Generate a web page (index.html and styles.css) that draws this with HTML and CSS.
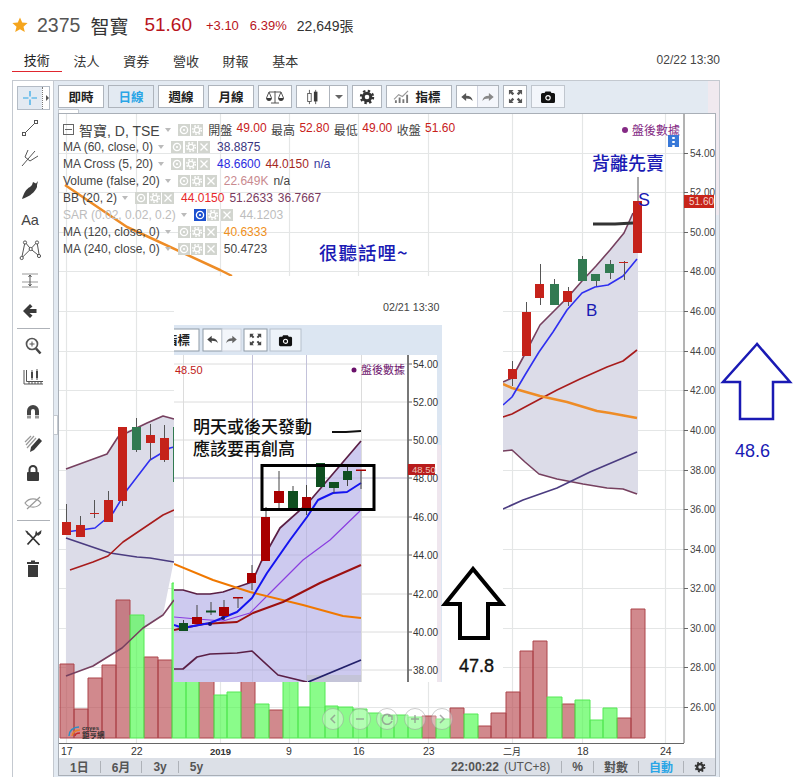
FILE: index.html
```html
<!DOCTYPE html>
<html lang="zh-Hant">
<head>
<meta charset="utf-8">
<title>2375 智寶</title>
<link rel="stylesheet" href="styles.css">
</head>
<body>
<svg class="defs" aria-hidden="true">
  <symbol id="i-eye" viewBox="0 0 12 12"><circle class="w-line" cx="6" cy="6" r="3.6"/><circle class="w-fill" cx="6" cy="6" r="1.1"/></symbol>
  <symbol id="i-gear" viewBox="0 0 12 12"><circle class="w-line" cx="6" cy="6" r="2.7"/><circle class="w-teeth" cx="6" cy="6" r="4.3"/></symbol>
  <symbol id="i-x" viewBox="0 0 12 12"><path class="w-line" d="M2.5 2.5L9.5 9.5M9.5 2.5L2.5 9.5"/></symbol>
  <symbol id="i-cog" viewBox="0 0 16 16"><circle class="cog-ring" cx="8" cy="8" r="3.8"/><circle class="cog-teeth" cx="8" cy="8" r="6"/></symbol>
  <symbol id="i-undo" viewBox="0 0 16 16"><path d="M1.5 8L7 3.5V6.5C11.5 6.5 14 8.5 14.5 12.5C13 10.5 11 9.6 7 9.6V12.5Z"/></symbol>
  <symbol id="i-redo" viewBox="0 0 16 16"><path d="M14.5 8L9 3.5V6.5C4.5 6.5 2 8.5 1.5 12.5C3 10.5 5 9.6 9 9.6V12.5Z"/></symbol>
  <symbol id="i-full" viewBox="0 0 16 16"><path d="M1 1H6L4.4 2.6L6.6 4.8L4.8 6.6L2.6 4.4L1 6ZM15 1V6L13.4 4.4L11.2 6.6L9.4 4.8L11.6 2.6L10 1ZM1 15V10L2.6 11.6L4.8 9.4L6.6 11.2L4.4 13.4L6 15ZM15 15H10L11.6 13.4L9.4 11.2L11.2 9.4L13.4 11.6L15 10Z"/></symbol>
  <symbol id="i-cam" viewBox="0 0 16 16"><path d="M1 5.5Q1 4 2.5 4H4.5L5.5 2.5H10.5L11.5 4H13.5Q15 4 15 5.5V12.5Q15 14 13.5 14H2.5Q1 14 1 12.5Z"/><circle class="cam-lens" cx="8" cy="8.8" r="2.2"/></symbol>
</svg>

<div class="page">
  <header class="quote">
    <svg class="star" viewBox="0 0 16 16"><path d="M8 .6L10.2 5.6L15.6 6.1L11.5 9.7L12.8 15L8 12.2L3.2 15L4.5 9.7L.4 6.1L5.8 5.6Z"/></svg>
    <span class="code">2375</span>
    <span class="name">智寶</span>
    <span class="price">51.60</span>
    <span class="change">+3.10</span>
    <span class="change pct">6.39%</span>
    <span class="volume">22,649張</span>
  </header>

  <nav class="tabs">
    <a class="tab tab-on">技術</a>
    <a class="tab">法人</a>
    <a class="tab">資券</a>
    <a class="tab">營收</a>
    <a class="tab">財報</a>
    <a class="tab">基本</a>
    <time class="stamp">02/22 13:30</time>
  </nav>

  <section class="app">
    <aside class="rail">
      <div class="rail-on">
        <svg class="ic" viewBox="0 0 24 24"><path class="cross" d="M12 5V10.5M12 13.500V19M5 12H10.500M13.500 12H19"/></svg>
        <span class="rail-more"></span>
      </div>
      <div class="rail-group draw">
        <div class="ri"><svg class="ic" viewBox="0 0 24 24"><path class="ln" d="M6 18L18 6"/><rect class="node" x="4.500" y="16.500" width="3" height="3"/><rect class="node" x="16.500" y="4.500" width="3" height="3"/></svg></div>
        <div class="ri"><svg class="ic" viewBox="0 0 24 24"><path class="ln" d="M4 20L10 13M7 11L10 4M7 11L12 15L20 10M10 13L17 5"/></svg></div>
        <div class="ri g2"><svg class="ic" viewBox="0 0 24 24"><path class="solid" d="M4 21C6 15 8 11 12 9L14 7L15 4L18 5.500L20 3L19 7V9L18 11C15 16 10 19 4 21Z"/></svg></div>
        <div class="ri aa">Aa</div>
        <div class="ri g1"><svg class="ic" viewBox="0 0 24 24"><path class="ln" d="M3.700 19L7 3L12.700 10L19 3L21.300 17L12.700 10L3.700 19"/><circle class="node" cx="7" cy="3.500" r="1.600"/><circle class="node" cx="19" cy="3.500" r="1.600"/><circle class="node" cx="12.700" cy="10" r="1.600"/><circle class="node" cx="3.700" cy="19" r="1.600"/><circle class="node" cx="21" cy="17" r="1.600"/></svg></div>
        <div class="ri"><svg class="ic" viewBox="0 0 24 24"><path class="ln-soft" d="M4 5H20M4 13H20M4 18H20"/><path class="ln" d="M12 6V17M10.500 8L12 6L13.500 8M10.500 15L12 17L13.500 15"/></svg></div>
        <div class="ri"><svg class="ic" viewBox="0 0 24 24"><path class="solid" d="M5 12L12 5L14.500 7.500L11.500 10H18.500V14H11.500L14.500 16.500L12 19Z"/></svg></div>
      </div>
      <hr class="rail-sep">
      <div class="rail-group">
        <div class="ri"><svg class="ic" viewBox="0 0 24 24"><circle class="mag" cx="11" cy="10" r="5.500"/><path class="ln" d="M8.500 10H13.500M11 7.500V12.500"/><path class="mag-h" d="M15 14.500L19.500 19.500"/></svg></div>
        <div class="ri g1"><svg class="ic" viewBox="0 0 24 24"><path class="ln" d="M3 5V19H22M5.500 5V16.500H22M8 19V17M11 19V17M14 19V17M17 19V17M20 19V17"/><path class="solid" d="M10 7H12V13H10ZM15 6H17V13H15Z"/><path class="ln" d="M11 5V15M16 4V15"/></svg></div>
        <div class="ri g5"><svg class="ic" viewBox="0 0 24 24"><path class="magnet" d="M8 15V11A4 4 0 0 1 16 11V15"/><path class="magnet-tip" d="M8 15.500V18.500M16 15.500V18.500"/></svg></div>
        <div class="ri g1"><svg class="ic" viewBox="0 0 24 24"><path class="ln-soft" d="M5 14L13 5M6 17L15 7M4 11L10 5"/><path class="solid" d="M9 21L10 16L18 7L21 10L13 19Z"/></svg></div>
        <div class="ri"><svg class="ic" viewBox="0 0 24 24"><path class="shackle" d="M8.500 12V8.500A3.500 3.500 0 0 1 15.500 8.500V12"/><rect class="solid" x="6" y="11" width="12" height="9" rx="1"/></svg></div>
        <div class="ri"><svg class="ic" viewBox="0 0 24 24"><path class="ln-soft" d="M4 12C8 6.500 16 6.500 20 12C16 17.500 8 17.500 4 12ZM6 18L19 6"/></svg></div>
      </div>
      <hr class="rail-sep">
      <div class="rail-group">
        <div class="ri"><svg class="ic" viewBox="0 0 24 24"><path class="tool-bar" d="M7 7L18.500 19M16 8L6.500 18.500"/><path class="solid" d="M15 4.500L16.500 7L18.500 5.500L20.500 4L20 7.500L17.500 9.800L14 8.500ZM4 4.500L6.500 5L8.500 8.500L7 9Z"/></svg></div>
        <div class="ri g1"><svg class="ic" viewBox="0 0 24 24"><path class="solid" d="M10 3.500H14V5H18V7H6V5H10ZM7 8H17V20H7Z"/></svg></div>
      </div>
    </aside>

    <div class="main">
      <span class="split"></span>
      <div class="toolbar">
        <button class="btn w46">即時</button>
        <button class="btn w46 btn-on">日線</button>
        <button class="btn w46">週線</button>
        <button class="btn w46">月線</button>
        <button class="btn w34"><svg class="tb" viewBox="0 0 20 16"><path class="ln" d="M10 2V14M6 14H14M4 3H16M4 3L1.500 9M4 3L6.500 9M16 3L13.500 9M16 3L18.500 9"/><path class="solid" d="M1 9H7Q6.500 12 4 12Q1.500 12 1 9ZM13 9H19Q18.500 12 16 12Q13.500 12 13 9Z"/></svg></button>
        <div class="btn w52 split-btn">
          <span class="sb-main"><svg class="tb" viewBox="0 0 20 18"><path class="ln" d="M6 1V17M13 1V17"/><rect class="node" x="4" y="5" width="4" height="9"/><rect class="solid" x="11" y="3" width="4" height="11"/></svg></span>
          <span class="sb-arrow"></span>
        </div>
        <button class="btn w30"><svg class="tb cog"><use href="#i-cog"/></svg></button>
        <button class="btn w66 ind"><svg class="tb-ind" viewBox="0 0 18 16"><path class="ln-soft" d="M1 11L6 6L10 8L16 2"/><path class="solid-soft" d="M2 12H4V15H2ZM6 9H8V15H6ZM10 11H12V15H10ZM14 6H16V15H14Z"/></svg>指標</button>
        <div class="btn w43 pair">
          <span class="half"><svg class="arrow"><use href="#i-undo"/></svg></span>
          <span class="half half-off"><svg class="arrow"><use href="#i-redo"/></svg></span>
        </div>
        <button class="btn w24"><svg class="full"><use href="#i-full"/></svg></button>
        <button class="btn w34 btn-soft"><svg class="cam"><use href="#i-cam"/></svg></button>
      </div>
      <span class="mini-tab"></span>

      <div class="chart">
        <svg class="plot" viewBox="59 114 656 644" width="656" height="644">
          <path class="grid" d="M59 153.500H684M59 192.500H684M59 232.500H684M59 271.500H684M59 311.500H684M59 351.500H684M59 390.500H684M59 430.500H684M59 470.500H684M59 509.500H684M59 549.500H684M59 588.500H684M59 628.500H684M59 667.500H684M59 707.500H684"/>
          <path class="grid" d="M66.500 114V743M136.500 114V743M220.500 114V743M289.500 114V743M358.500 114V743M428.500 114V743M512.500 114V743M582.500 114V743M665.500 114V743"/>

          <path class="band" d="M66 469L107 454L118 437L147 423L163 416L174 419V560L163 615L143 628L122 648L93 666L66 676Z"/>
          <path class="band" d="M503 382L512 378L526 352L540 325L554 311L568 297L582 281L596 266L610 250L624 233L633 213L638 201V494L623 489L607 488L583 484L557 479L539 474L525 462L512 450L503 451Z"/>

          <path class="vol-up" d="M60 738V664H74V738ZM74 738V709H88V738ZM88 738V678H102V738ZM102 738V665H116V738ZM116 738V600H130V738ZM144 738V657H158V738ZM158 738V660H172V738ZM199 738V660H214V738ZM241 738V660H255V738ZM269 738V710H283V738ZM422 738V716H436V738ZM450 738V708H464V738ZM478 738V726H491V738ZM491 738V713H506V738ZM506 738V692H520V738ZM520 738V651H533V738ZM533 738V641H547V738ZM562 738V704H575V738ZM617 738V718H631V738ZM631 738V609H645V738Z"/>
          <path class="vol-dn" d="M130 738V615H144V738ZM172 738V583H186V738ZM186 738V660H199V738ZM214 738V695H227V738ZM227 738V692H241V738ZM255 738V704H269V738ZM283 738V660H298V738ZM298 738V707H310V738ZM310 738V660H325V738ZM325 738V706H338V738ZM338 738V707H353V738ZM353 738V709H367V738ZM367 738V713H381V738ZM381 738V715H394V738ZM394 738V715H408V738ZM408 738V717H422V738ZM436 738V719H450V738ZM464 738V714H478V738ZM547 738V697H562V738ZM575 738V700H590V738ZM590 738V720H603V738ZM603 738V708H617V738Z"/>

          <polyline class="l-bb" points="66,469 107,454 118,437 147,423 163,416 174,419"/>
          <polyline class="l-bb" points="66,676 93,666 122,648 143,628 163,615 174,600"/>
          <polyline class="l-bb" points="503,382 512,378 526,352 540,325 554,311 568,297 582,281 596,266 610,250 624,233 633,213"/>
          <polyline class="l-bb" points="503,451 512,450 525,462 539,474 557,479 583,484 607,488 623,489 637,494"/>
          <polyline class="l-60" points="66,538 110,553 137,557 150,558 174,562"/>
          <polyline class="l-60" points="503,509 523,500 557,488 590,472 637,452"/>
          <polyline class="l-20" points="70,570 93,562 108,556 123,542 163,515 174,510"/>
          <polyline class="l-20" points="503,417 512,414 525,407 540,399 557,390 580,379 607,367 623,361 637,350"/>
          <polyline class="l-or" points="65,185 127,227 220,270 232,276"/>
          <polyline class="l-or" points="503,384 512,388 540,396 567,402 597,411 610,413 637,418"/>
          <polyline class="l-5" points="66,532 95,528 113,513 127,490 150,460 170,448 174,447"/>
          <polyline class="l-5" points="503,405 512,397 525,375 539,352 553,332 567,310 582,293 595,287 608,285 623,276 637,259"/>
          <polyline class="l-ink" points="593,224 615,224 633,223"/>

          <path class="wick" d="M66.500 504V535M80.500 516V537M94.500 500V518M108.500 491V522M122.500 427V506M136.500 418V452M150.500 424V460M164.500 425V462M512.500 361V386M526.500 302V356M540.500 264V305M554.500 279V305M568.500 287V306M582.500 256V281M596.500 274V286M610.500 260V279M624.500 261V280M638 177V253"/>
          <g class="c-up">
            <rect x="62" y="522" width="9" height="13"/><rect x="76" y="525" width="9" height="12"/><rect x="90" y="513" width="9" height="1"/><rect x="104" y="500" width="9" height="22"/><rect x="118" y="427" width="9" height="74"/><rect x="146" y="435" width="9" height="8"/><rect x="160" y="438" width="9" height="22"/>
            <rect x="508" y="369" width="9" height="10"/><rect x="522" y="312" width="9" height="44"/><rect x="535" y="284" width="9" height="14"/><rect x="563" y="291" width="9" height="11"/><rect x="619" y="262" width="9" height="1"/><rect x="633" y="201" width="9" height="52"/>
          </g>
          <g class="c-dn">
            <rect x="132" y="427" width="9" height="23"/><rect x="173" y="427" width="1" height="55"/>
            <rect x="550" y="284" width="9" height="21"/><rect x="578" y="259" width="9" height="22"/><rect x="591" y="274" width="9" height="7"/><rect x="605" y="264" width="9" height="9"/>
          </g>

          <path class="logo-a" d="M69 736C69 731 73 727 79 727"/>
          <path class="logo-b" d="M72 736C72 733 75 730 80 730"/>
          <path class="logo-c" d="M75 736C75 734 77 733 80 733"/>
          <text class="logo-en" x="82" y="729.500">cnyes</text>
          <text class="logo-zh" x="82" y="738">鉅亨網</text>

          <path class="axis" d="M684 114V743M59 743.500H684"/>
          <path class="tick" d="M684 153.500H688M684 192.500H688M684 232.500H688M684 271.500H688M684 311.500H688M684 351.500H688M684 390.500H688M684 430.500H688M684 470.500H688M684 509.500H688M684 549.500H688M684 588.500H688M684 628.500H688M684 667.500H688M684 707.500H688"/>
          <g class="y-lab">
            <text x="690" y="157">54.00</text><text x="690" y="196">52.00</text><text x="690" y="236">50.00</text><text x="690" y="275">48.00</text><text x="690" y="315">46.00</text><text x="690" y="355">44.00</text><text x="690" y="394">42.00</text><text x="690" y="434">40.00</text><text x="690" y="474">38.00</text><text x="690" y="513">36.00</text><text x="690" y="553">34.00</text><text x="690" y="592">32.00</text><text x="690" y="632">30.00</text><text x="690" y="671">28.00</text><text x="690" y="711">26.00</text>
          </g>
          <rect class="tag" x="684" y="195" width="30" height="13"/>
          <text class="tag-t" x="689" y="205">51.60</text>
          <g class="x-lab">
            <text x="61" y="755">17</text><text x="131" y="755">22</text><text class="x-year" x="210" y="755">2019</text><text x="286" y="755">9</text><text x="353" y="755">16</text><text x="423" y="755">23</text><text class="x-zh" x="503" y="755">二月</text><text x="577" y="755">18</text><text x="660" y="755">24</text>
          </g>

          <g class="navc">
            <circle cx="333" cy="719" r="10.500"/><circle cx="360" cy="719" r="10.500"/><circle cx="387" cy="719" r="10.500"/><circle cx="415" cy="719" r="10.500"/><circle cx="442" cy="719" r="10.500"/>
            <path class="navi" d="M335 715L331 719L335 723M356 719H364M411 719H419M415 715V723M440 715L444 719L440 723M391 716A5 5 0 1 0 392 721M388 716H392V720"/>
          </g>
        </svg>

        <div class="legend">
          <div class="lg lg-top"><span class="collapse"></span><span class="lg-name">智寶, D, TSE</span><i class="caret"></i><span class="tools t-top"><b class="t"><svg><use href="#i-eye"/></svg></b><b class="t"><svg><use href="#i-gear"/></svg></b></span><span class="vals v-top"><span>開盤</span><span class="v-red">49.00</span><span>最高</span><span class="v-red">52.80</span><span>最低</span><span class="v-red">49.00</span><span>收盤</span><span class="v-red">51.60</span></span></div>
          <div class="lg"><span>MA (60, close, 0)</span><i class="caret"></i><span class="tools"><b class="t"><svg><use href="#i-eye"/></svg></b><b class="t"><svg><use href="#i-gear"/></svg></b><b class="t"><svg><use href="#i-x"/></svg></b></span><span class="vals"><span class="v-navy">38.8875</span></span></div>
          <div class="lg"><span>MA Cross (5, 20)</span><i class="caret"></i><span class="tools"><b class="t"><svg><use href="#i-eye"/></svg></b><b class="t"><svg><use href="#i-gear"/></svg></b><b class="t"><svg><use href="#i-x"/></svg></b></span><span class="vals"><span class="v-blue">48.6600</span><span class="v-brick">44.0150</span><span class="v-indigo">n/a</span></span></div>
          <div class="lg"><span>Volume (false, 20)</span><i class="caret"></i><span class="tools"><b class="t"><svg><use href="#i-eye"/></svg></b><b class="t"><svg><use href="#i-gear"/></svg></b><b class="t"><svg><use href="#i-x"/></svg></b></span><span class="vals"><span class="v-rose">22.649K</span><span>n/a</span></span></div>
          <div class="lg"><span>BB (20, 2)</span><i class="caret"></i><span class="tools t-bb"><b class="t"><svg><use href="#i-eye"/></svg></b><b class="t"><svg><use href="#i-gear"/></svg></b><b class="t"><svg><use href="#i-x"/></svg></b></span><span class="vals"><span class="v-bright">44.0150</span><span class="v-plum">51.2633</span><span class="v-plum">36.7667</span></span></div>
          <div class="lg lg-off"><span>SAR (0.02, 0.02, 0.2)</span><i class="caret"></i><span class="tools"><b class="t t-on"><svg><use href="#i-eye"/></svg></b><b class="t"><svg><use href="#i-gear"/></svg></b><b class="t"><svg><use href="#i-x"/></svg></b></span><span class="vals"><span>44.1203</span></span></div>
          <div class="lg"><span>MA (120, close, 0)</span><i class="caret"></i><span class="tools"><b class="t"><svg><use href="#i-eye"/></svg></b><b class="t"><svg><use href="#i-gear"/></svg></b><b class="t"><svg><use href="#i-x"/></svg></b></span><span class="vals"><span class="v-orange">40.6333</span></span></div>
          <div class="lg"><span>MA (240, close, 0)</span><i class="caret"></i><span class="tools"><b class="t"><svg><use href="#i-eye"/></svg></b><b class="t"><svg><use href="#i-gear"/></svg></b><b class="t"><svg><use href="#i-x"/></svg></b></span><span class="vals"><span>50.4723</span></span></div>
        </div>

        <div class="after"><i class="dot"></i>盤後數據</div>
        <span class="info"></span>

        <div class="status">
          <div class="st-left"><span class="st">1日</span><span class="st">6月</span><span class="st">3y</span><span class="st st-last">5y</span></div>
          <div class="st-right">
            <span class="clock">22:00:22</span><span class="utc">(UTC+8)</span>
            <span class="st-r">%</span><span class="st-r st-wide">對數</span><span class="st-r st-wide st-blue">自動</span>
            <svg class="st-cog"><use href="#i-cog"/></svg>
          </div>
        </div>
      </div>
    </div>
  </section>

  <svg class="markup" viewBox="0 0 810 777" width="810" height="777">
    <rect class="patch" x="174" y="276" width="329" height="406"/>
    <text class="inset-time" x="383" y="311">02/21 13:30</text>
    <defs><clipPath id="inset-clip"><rect x="174" y="325" width="268" height="357"/></clipPath></defs>
    <g clip-path="url(#inset-clip)">
      <rect class="in-frame" x="174" y="325" width="268" height="357"/>
      <rect class="in-pink" x="437" y="445" width="4" height="237"/>
      <rect class="in-btn" x="160" y="329" width="39" height="22"/>
      <text class="in-btn-t" x="190" y="345" text-anchor="end">指標</text>
      <rect class="in-btn" x="203" y="329" width="19" height="22"/>
      <rect class="in-btn in-btn-off" x="222" y="329" width="19" height="22"/>
      <use class="in-undo" href="#i-undo" x="206" y="333" width="13" height="13"/>
      <use class="in-redo" href="#i-redo" x="225" y="333" width="13" height="13"/>
      <rect class="in-btn" x="244" y="329" width="23" height="22"/>
      <use class="in-full" href="#i-full" x="249" y="333" width="13" height="13"/>
      <rect class="in-btn in-btn-soft" x="270" y="329" width="31" height="22"/>
      <use class="in-cam" href="#i-cam" x="278" y="333" width="15" height="15"/>
      <rect class="in-plot" x="174" y="355" width="263" height="327"/>
      <path class="in-grid" d="M174 364H408M174 402H408M174 440H408M174 478H408M174 517H408M174 555H408M174 594H408M174 632H408M174 670H408M183.500 355V682M252.500 355V682M306.500 355V682M361.500 355V682"/>
      <path class="in-band" d="M174 590L183 590L197 594L210 594L223 592L252 582L261 562L280 528L308 503L361 441V682H174Z"/>
      <rect class="in-foot" x="307" y="675" width="54" height="7"/>
      <path class="in-grid-faint" d="M174 478H408M174 555H361M174 632H361M174 670H361M252.500 355V682M306.500 355V682"/>
      <polyline class="i-bb" points="174,590 183,590 197,594 210,594 223,592 252,582 261,562 280,528 308,503 361,441"/>
      <polyline class="i-bb" points="174,669 183,669 197,657 210,654 237,653 252,651 278,675 307,682"/>
      <polyline class="i-60" points="308,682 361,660"/>
      <polyline class="i-10" points="174,617 197,619 223,621 250,613 270,593 303,560 330,540 360,511"/>
      <polyline class="i-or" points="174,564 213,580 250,592 303,605 343,616 361,618"/>
      <polyline class="i-20" points="174,630 203,624 237,622 253,613 283,602 320,583 361,565"/>
      <polyline class="i-5" points="174,625 183,628 210,623 237,612 252,598 267,573 290,540 307,517 318,500 333,493 347,492 361,483"/>
      <path class="i-wick" d="M183.500 620V631M197 605V624M211 602V615M224 600V616M238 598V608M252 565V590M266 507V561M279 471V508M293 486V511M306.500 485V515M320.500 463V487M334 482V493M347.500 467V486M361 470V489"/>
      <g class="i-up">
        <rect x="192" y="617" width="10" height="7"/><rect x="219" y="607" width="10" height="9"/><rect x="233" y="597" width="10" height="1.500"/><rect x="247" y="573" width="9" height="10"/><rect x="261" y="517" width="9" height="44"/><rect x="274" y="491" width="10" height="12"/><rect x="302" y="497" width="9" height="13"/><rect x="356" y="469.500" width="10" height="1.500"/>
      </g>
      <g class="i-dn">
        <rect x="179" y="623" width="9" height="8"/><rect x="206" y="610.500" width="10" height="2"/><rect x="288" y="491" width="10" height="20"/><rect x="316" y="463" width="9" height="24"/><rect x="329" y="482" width="10" height="6"/><rect x="343" y="471" width="9" height="9"/>
      </g>
      <circle class="i-dot" cx="210" cy="624" r="2"/><circle class="i-dot" cx="223" cy="618" r="2"/>
      <path class="in-axis" d="M408 355V682"/>
      <path class="in-tick" d="M408 364H412M408 402H412M408 440H412M408 478H412M408 517H412M408 555H412M408 594H412M408 632H412M408 670H412"/>
      <g class="in-y">
        <text x="413" y="368">54.00</text><text x="413" y="406">52.00</text><text x="413" y="444">50.00</text><text x="413" y="482">48.00</text><text x="413" y="521">46.00</text><text x="413" y="559">44.00</text><text x="413" y="598">42.00</text><text x="413" y="636">40.00</text><text x="413" y="674">38.00</text>
      </g>
      <rect class="in-tag" x="408" y="464" width="27" height="11"/>
      <text class="in-tag-t" x="412" y="473">48.50</text>
      <text class="in-red" x="175" y="374">48.50</text>
      <circle class="in-pdot" cx="354" cy="370" r="2.500"/>
      <text class="in-after" x="361" y="374">盤後數據</text>
    </g>
    <path class="mk-line" d="M332 432H346L361 431"/>
    <text class="mk-text" x="193" y="433">明天或後天發動</text>
    <text class="mk-text" x="193" y="455">應該要再創高</text>
    <rect class="mk-box" x="262" y="465.500" width="112" height="44"/>
    <path class="mk-arrow" d="M473 569L445 604H460V638H488V604H502Z"/>
    <text class="mk-num" x="459" y="672">47.8</text>

    <text class="bl-zh bl-wide" x="319" y="260">很聽話哩~</text>
    <text class="bl-zh" x="592" y="170">背離先賣</text>
    <text class="bl-s" x="638" y="206">S</text>
    <text class="bl-b" x="586" y="316">B</text>
    <path class="bl-arrow" d="M757 344L723 382H740V419H773V382H790Z"/>
    <text class="bl-num" x="735" y="457">48.6</text>
  </svg>
</div>
</body>
</html>
```

FILE: styles.css
```css
* { box-sizing: border-box; }
html, body { margin: 0; padding: 0; background: #fff; }
body { font-family: "Liberation Sans", "Noto Sans CJK TC", sans-serif; color: #333; }
.defs { position: absolute; width: 0; height: 0; }
.page { position: relative; width: 810px; height: 777px; overflow: hidden; }

/* quote header */
.quote { display: flex; align-items: center; height: 48px; padding: 2px 0 0 12px; }
.star { width: 16px; height: 16px; fill: #f5a51d; }
.code { margin-left: 9px; font-size: 19.500px; color: #555; }
.name { margin-left: 10px; font-size: 19px; color: #333; }
.price { margin-left: 16px; font-size: 19px; color: #b8141c; }
.change { margin-left: 14px; font-size: 13px; color: #b8141c; }
.pct { margin-left: 11px; }
.volume { margin-left: 10px; font-size: 14px; color: #333; }

/* tabs */
.tabs { display: flex; align-items: center; width: 708px; height: 25px; margin: 0 0 7px 12px; padding-bottom: 1px; }
.tab { display: flex; align-items: center; justify-content: center; width: 49.700px; height: 24px; font-size: 13px; color: #333; }
.tab-on { border-bottom: 1px solid #e0262e; color: #222; }
.stamp { margin-left: auto; font-size: 12px; color: #444; }

/* app */
.app { display: flex; width: 708px; height: 700px; margin-left: 12px; border: 1px solid #c4c9d0; }
.rail { width: 41px; flex: none; display: flex; flex-direction: column; padding-top: 5px; border-right: 1px solid #c4c9d0; background: #fff; }
.rail-on { display: flex; width: 33px; height: 24px; margin: 0 0 3px 4px; border: 1px solid #b4bcc6; background: #e3eaf2; }
.rail-on .ic { margin: -1px 0 0 0; }
.rail-more { flex: 1; border-left: 1px dotted #777; background: #fff; position: relative; }
.rail-more::after { content: ""; position: absolute; left: 3px; top: 8px; border-left: 3px solid #555; border-top: 3px solid transparent; border-bottom: 3px solid transparent; }
.rail-group { display: flex; flex-direction: column; align-items: center; }
.rail-group.draw { padding-right: 6px; }
.ri { display: flex; align-items: center; justify-content: center; height: 30px; }
.g1 { margin-top: 1px; }
.g2 { margin-top: 2px; }
.g5 { margin-top: 5px; }
.aa { font-size: 14.500px; color: #444; }
.ic { width: 24px; height: 24px; display: block; }
.rail-sep { width: 33px; height: 1px; margin: 2px 0 2px 4px; border: 0; background: #aeb2b8; flex: none; }
.cross { fill: none; stroke: #2aa5e6; stroke-width: 1.200; }
.ln { fill: none; stroke: #555; stroke-width: 1; }
.ln-soft { fill: none; stroke: #999; stroke-width: 1.200; }
.node { fill: #fff; stroke: #555; stroke-width: 1; }
.solid { fill: #3a3a3a; }
.solid-soft { fill: #777; }
.mag { fill: none; stroke: #555; stroke-width: 1.700; }
.mag-h { fill: none; stroke: #444; stroke-width: 2.600; }
.magnet { fill: none; stroke: #444; stroke-width: 4; }
.magnet-tip { fill: none; stroke: #999; stroke-width: 4; }
.shackle { fill: none; stroke: #3a3a3a; stroke-width: 2; }
.tool-bar { fill: none; stroke: #333; stroke-width: 1.800; }

/* main column */
.main { flex: 1; position: relative; padding: 4px 3px 0 4px; background: linear-gradient(#f0e9ef, #f0e9ef) right top / 11px 134px no-repeat, #e3eaf2; }
.split { position: absolute; left: 0; top: 334px; width: 4px; height: 20px; background: #fff; border: 1px solid #c4c9d0; border-left: 0; }
.toolbar { display: flex; gap: 4px; height: 23px; margin-bottom: 5px; }
.btn { display: flex; align-items: center; justify-content: center; gap: 5px; height: 23px; padding: 0; border: 1px solid #aeb4bc; background: #fff; font: bold 12.500px "Noto Sans CJK TC", sans-serif; color: #222; }
.w46 { width: 46px; }
.w34 { width: 34px; }
.w52 { width: 52px; }
.w30 { width: 30px; }
.w66 { width: 66px; }
.w43 { width: 43px; }
.w24 { width: 24px; }
.btn-on { background: #e3eaf2; color: #2aa5e6; }
.btn-soft { background: #f3f6fb; border-color: #c0c6ce; }
.ind { gap: 5px; padding-right: 4px; }
.tb { width: 20px; height: 16px; }
.tb-ind { width: 17px; height: 15px; }
.cog { width: 16px; height: 16px; }
.cog-ring { fill: none; stroke: #333; stroke-width: 3; }
.cog-teeth { fill: none; stroke: #333; stroke-width: 2.400; stroke-dasharray: 2.360 2.360; }
.split-btn { gap: 0; }
.sb-main { flex: 1; display: flex; align-items: center; justify-content: center; height: 21px; border-right: 1px solid #aeb4bc; }
.sb-arrow { width: 17px; display: flex; justify-content: center; }
.sb-arrow::after { content: ""; border-top: 4px solid #666; border-left: 4px solid transparent; border-right: 4px solid transparent; }
.pair { gap: 0; }
.half { flex: 1; height: 21px; display: flex; align-items: center; justify-content: center; fill: #555; }
.half-off { border-left: 1px solid #d0d4e0; background: #f4f6fb; fill: #888; }
.arrow { width: 14px; height: 14px; }
.full { width: 15px; height: 15px; fill: #555; }
.cam { width: 16px; height: 16px; fill: #111; }
.cam-lens { fill: #111; stroke: #fff; stroke-width: 1.200; }
.mini-tab { position: absolute; left: 4px; top: 28px; width: 21px; height: 5px; background: #fff; border: 1px solid #c4c9d0; border-bottom: 0; }

/* chart */
.chart { position: relative; width: 658px; border: 1px solid #a9afb7; background: #fff; }
.plot { display: block; }
.grid { fill: none; stroke: #e4e6e6; stroke-width: 1.200; }
.band { fill: #dcdce8; }
.vol-up { fill: #b94a50; fill-opacity: .65; stroke: #ac444a; stroke-width: 1; }
.vol-dn { fill: #4cfb4c; fill-opacity: .65; stroke: #55e855; stroke-width: 1; }
polyline { fill: none; stroke-linejoin: round; }
.l-bb { stroke: #76405f; stroke-width: 1.600; }
.l-60 { stroke: #4b3c80; stroke-width: 1.600; }
.l-20 { stroke: #a81c1c; stroke-width: 1.600; }
.l-or { stroke: #ee8c26; stroke-width: 2.500; }
.l-5 { stroke: #2f2ff0; stroke-width: 1.600; }
.l-ink { stroke: #333; stroke-width: 3; }
.wick { fill: none; stroke: #555; stroke-width: 1; }
.c-up { fill: #c5221a; }
.c-dn { fill: #327a52; }
.logo-a { fill: none; stroke: #2b8fc4; stroke-width: 1.500; }
.logo-b { fill: none; stroke: #e8802a; stroke-width: 1.500; }
.logo-c { fill: none; stroke: #c82a2a; stroke-width: 1.500; }
.logo-en { font: bold 6px "Liberation Sans", sans-serif; fill: #333; }
.logo-zh { font: bold 7.500px "Noto Sans CJK TC", sans-serif; fill: #333; }
.axis { fill: none; stroke: #666; stroke-width: 1; }
.tick { fill: none; stroke: #666; stroke-width: 1; }
.y-lab { font: 10px "Liberation Sans", sans-serif; fill: #444; }
.tag { fill: #c8251a; }
.tag-t { font: 10px "Liberation Sans", sans-serif; fill: #f6d6d0; }
.x-lab { font: 10.500px "Liberation Sans", sans-serif; fill: #333; }
.x-year { font-weight: bold; font-size: 9.500px; }
.x-zh { font: 9px "Noto Sans CJK TC", sans-serif; }
.navc circle { fill: #fff; fill-opacity: .35; stroke: #999; stroke-opacity: .5; stroke-width: 1; }
.navi { fill: none; stroke: #888; stroke-opacity: .7; stroke-width: 1.500; }

/* legend */
.legend { position: absolute; left: 4px; top: 7px; font-size: 12px; color: #444; }
.lg { display: flex; align-items: center; height: 17px; }
.lg-off { color: #bdbdbd; }
.collapse { position: relative; width: 11px; height: 11px; margin-right: 5px; border: 1px solid #666; }
.collapse::after { content: ""; position: absolute; left: 1px; right: 1px; top: 4px; height: 1px; background: #666; }
.lg-name { font-size: 14px; color: #444; }
.caret { width: 0; height: 0; margin: 0 7px 0 5px; border-top: 4px solid #bbb; border-left: 3.500px solid transparent; border-right: 3.500px solid transparent; }
.tools { display: flex; gap: 1.500px; }
.t { display: block; width: 12px; height: 12px; background: #d2d5cf; }
.t svg { display: block; width: 12px; height: 12px; }
.t-on { background: #1c50cf; }
.w-line { fill: none; stroke: #fff; stroke-width: 1.300; }
.w-fill { fill: #fff; }
.w-teeth { fill: none; stroke: #fff; stroke-width: 1.500; stroke-dasharray: 1.690 1.690; }
.vals { display: flex; gap: 5px; margin-left: 7px; }
.v-top { margin-left: 5px; gap: 4.400px; }
.v-red { color: #c8201a; }
.v-navy { color: #3b3680; }
.v-blue { color: #2a2ae0; }
.v-brick { color: #a5281e; }
.v-indigo { color: #3a3aa0; }
.v-rose { color: #c98a8f; }
.v-bright { color: #e8282a; }
.v-plum { color: #7a3a5e; }
.v-orange { color: #f09020; }
.after { position: absolute; right: 35px; top: 7px; display: flex; align-items: center; height: 17px; gap: 3px; font-size: 12px; color: #842a84; white-space: nowrap; }
.dot { width: 6px; height: 6px; border-radius: 50%; background: #842a84; margin-right: 1px; }
.info { position: absolute; left: 609px; top: 21px; width: 11px; height: 12px; background: radial-gradient(circle, #fff 1px, transparent 1.500px) center top 1px / 3px 4px repeat-y, #3878d8; }

/* status bar */
.status { display: flex; justify-content: space-between; height: 17px; background: #dce0e7; font-size: 12px; color: #555; }
.st-left, .st-right { display: flex; align-items: center; }
.st { display: flex; align-items: center; height: 12px; padding: 0 11px; border-right: 1px solid #aeb2b8; font-weight: bold; }
.st-last { border-right: 0; }
.clock { font-weight: bold; }
.utc { margin: 0 11px 0 5px; }
.st-r { display: flex; align-items: center; height: 12px; padding: 0 10px; border-left: 1px solid #aeb2b8; font-weight: bold; }
.st-wide { font-family: "Noto Sans CJK TC", sans-serif; padding: 0 10px; }
.st-blue { color: #2aa5e6; border-right: 1px solid #aeb2b8; }
.st-cog { width: 12px; height: 12px; margin: 0 9px 0 10px; }

/* pasted screenshot and hand-drawn markup over the chart */
.markup { position: absolute; left: 0; top: 0; }
.patch { fill: #fff; }
.inset-time { font: 10.700px "Liberation Sans", sans-serif; fill: #444; }
.in-frame { fill: #dce6f2; }
.in-pink { fill: #efe6ee; }
.in-btn { fill: #fff; stroke: #8e9aa6; stroke-width: 1; }
.in-btn-off { stroke: #ccd2dc; fill: #f3f6fb; }
.in-btn-soft { stroke: #b6c0cc; fill: #eef3f9; }
.in-btn-t { font: bold 12.500px "Noto Sans CJK TC", sans-serif; fill: #222; }
.in-undo { fill: #444; }
.in-redo { fill: #666; }
.in-full { fill: #444; }
.in-cam { fill: #111; }
.in-plot { fill: #fff; }
.in-grid { fill: none; stroke: #dcdcdc; stroke-width: 1; }
.in-band { fill: #cdcaef; }
.in-foot { fill: #c4c4d8; }
.in-grid-faint { fill: none; stroke: #b8b6d8; stroke-width: .7; }
.i-bb { stroke: #5a1f45; stroke-width: 1.700; }
.i-60 { stroke: #22206a; stroke-width: 1.800; }
.i-10 { stroke: #8a3ee0; stroke-width: 1.200; }
.i-or { stroke: #f07800; stroke-width: 2; }
.i-20 { stroke: #9c1010; stroke-width: 2; }
.i-5 { stroke: #1414f0; stroke-width: 2; }
.i-wick { fill: none; stroke: #444; stroke-width: 1; }
.i-up { fill: #a80000; }
.i-dn { fill: #0f4f20; }
.i-dot { fill: #14146a; }
.in-axis { fill: none; stroke: #777; stroke-width: 2; }
.in-tick { fill: none; stroke: #666; stroke-width: 1; }
.in-y { font: 10px "Liberation Sans", sans-serif; fill: #333; }
.in-tag { fill: #b81c1c; }
.in-tag-t { font: 9.500px "Liberation Sans", sans-serif; fill: #eec2b8; }
.in-red { font: 11px "Liberation Sans", sans-serif; fill: #c02018; }
.in-pdot { fill: #6a106a; }
.in-after { font: 11px "Noto Sans CJK TC", sans-serif; fill: #6a106a; }
.mk-line { fill: none; stroke: #111; stroke-width: 2; }
.mk-text { font: 500 17px "Noto Sans CJK TC", sans-serif; fill: #111; }
.mk-box { fill: none; stroke: #000; stroke-width: 3; }
.mk-arrow { fill: #fff; stroke: #000; stroke-width: 4; stroke-linejoin: miter; }
.mk-num { font: 18px "Liberation Sans", sans-serif; fill: #111; stroke: #111; stroke-width: .35; }
.bl-zh { font: 500 18px "Noto Sans CJK TC", sans-serif; fill: #1a1ab4; }
.bl-wide { font-size: 18.500px; letter-spacing: 1px; }
.bl-s { font: 18px "Liberation Sans", sans-serif; fill: #1a1ab4; }
.bl-b { font: 17px "Liberation Sans", sans-serif; fill: #1a1ab4; }
.bl-arrow { fill: #fff; stroke: #1a1ab4; stroke-width: 2.500; stroke-linejoin: miter; }
.bl-num { font: 18px "Liberation Sans", sans-serif; fill: #1a1ab4; }
```
